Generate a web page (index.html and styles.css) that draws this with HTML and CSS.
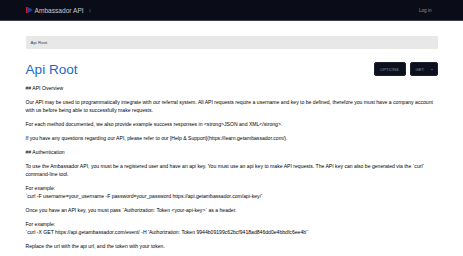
FILE: index.html
```html
<!DOCTYPE html>
<html lang="en">
<head>
    <meta charset="UTF-8">
    <meta name="viewport" content="width=device-width, initial-scale=1.0">
    <title>Api Root – Ambassador API</title>
    <link rel="stylesheet" href="styles.css">
</head>
<body>
    <header class="navbar">
        <div class="container nav-inner">
            <a class="brand" href="#">
                <svg class="logo" width="7" height="6" viewBox="0 0 7 6">
                    <rect x="0" y="0" width="1.6" height="6" fill="#c8202f"/>
                    <path d="M1.6 0 L7 3 L1.6 6 Z" fill="#2c3e9c"/>
                </svg>
                <span>Ambassador API</span>
                <small class="version">1</small>
            </a>
            <a class="login" href="#">Log in</a>
        </div>
    </header>
    <main class="container">
        <ul class="breadcrumb">
            <li>Api Root</li>
        </ul>
        <div class="page-head">
            <h1>Api Root</h1>
            <div class="actions">
                <button class="btn">OPTIONS</button>
                <button class="btn btn-get">GET <span class="caret"></span></button>
            </div>
        </div>
        <div class="description">
            <p>## API Overview</p>
            <p>Our API may be used to programmatically integrate with our referral system. All API requests require a username and key to be defined, therefore you must have a company account<br>with us before being able to successfully make requests.</p>
            <p>For each method documented, we also provide example success responses in &lt;strong&gt;JSON and XML&lt;/strong&gt;.</p>
            <p>If you have any questions regarding our API, please refer to our [Help &amp; Support](https://learn.getambassador.com/).</p>
            <p>## Authentication</p>
            <p>To use the Ambassador API, you must be a registered user and have an api key. You must use an api key to make API requests. The API key can also be generated via the `curl`<br>command-line tool.</p>
            <p>For example:<br>`curl -F username=your_username -F password=your_password https://api.getambassador.com/api-key/`</p>
            <p>Once you have an API key, you must pass `Authorization: Token &lt;your-api-key&gt;` as a header.</p>
            <p>For example:<br>`curl -X GET https://api.getambassador.com/event/ -H 'Authorization: Token 9944b09199c62bcf9418ad846dd0e4bbdfc6ee4b'`</p>
            <p>Replace the url with the api url, and the token with your token.</p>
        </div>
    </main>
</body>
</html>
```

FILE: styles.css
```css
body {
    margin: 0;
    padding: 0;
    font-family: "Liberation Sans", Arial, sans-serif;
    background-color: #fff;
    color: #000;
}
.container {
    width: 412px;
    margin: 0 auto;
}
.navbar {
    background-color: #0a0d17;
    border-bottom: 1px solid #3c4150;
}
.nav-inner {
    display: flex;
    justify-content: space-between;
    align-items: center;
    height: 20px;
}
.brand {
    display: flex;
    align-items: center;
    gap: 2px;
    color: #c9cad1;
    font-size: 6.6px;
    text-decoration: none;
}
.logo {
    display: block;
}
.version {
    color: #6b6f7c;
    font-size: 4px;
    margin-left: 3px;
    margin-top: 1px;
}
.login {
    color: #8d909a;
    font-size: 4.6px;
    text-decoration: none;
    margin-right: 6px;
}
.breadcrumb {
    list-style: none;
    margin: 15px 0 0;
    padding: 0 5px;
    height: 13px;
    line-height: 13px;
    background-color: #e8e8e8;
    color: #444;
    font-size: 4.4px;
    border-radius: 1px;
}
.page-head {
    display: flex;
    justify-content: space-between;
    align-items: center;
    margin-top: 13px;
    height: 14px;
}
.page-head h1 {
    margin: 0;
    font-size: 13.6px;
    font-weight: normal;
    line-height: 14px;
    color: #1a6bcc;
    position: relative;
    top: 1px;
}
.actions {
    display: flex;
    gap: 4px;
}
.btn {
    background-color: #0c111d;
    color: #8a8e99;
    border: 1px solid #1c2230;
    border-radius: 2px;
    font-family: "Liberation Sans", Arial, sans-serif;
    font-size: 4.2px;
    height: 14px;
    width: 32px;
    padding: 0;
}
.btn-get {
    width: 28px;
    text-align: left;
    padding-left: 5px;
    display: flex;
    align-items: center;
    justify-content: space-between;
    padding-right: 4px;
}
.caret {
    width: 0;
    height: 0;
    border-left: 1.3px solid transparent;
    border-right: 1.3px solid transparent;
    border-top: 1.5px solid #8a8e99;
}
.description {
    margin-top: 9px;
    font-size: 5.1px;
    line-height: 7.5px;
    white-space: nowrap;
}
.description p {
    margin: 0 0 6.7px;
}
```
